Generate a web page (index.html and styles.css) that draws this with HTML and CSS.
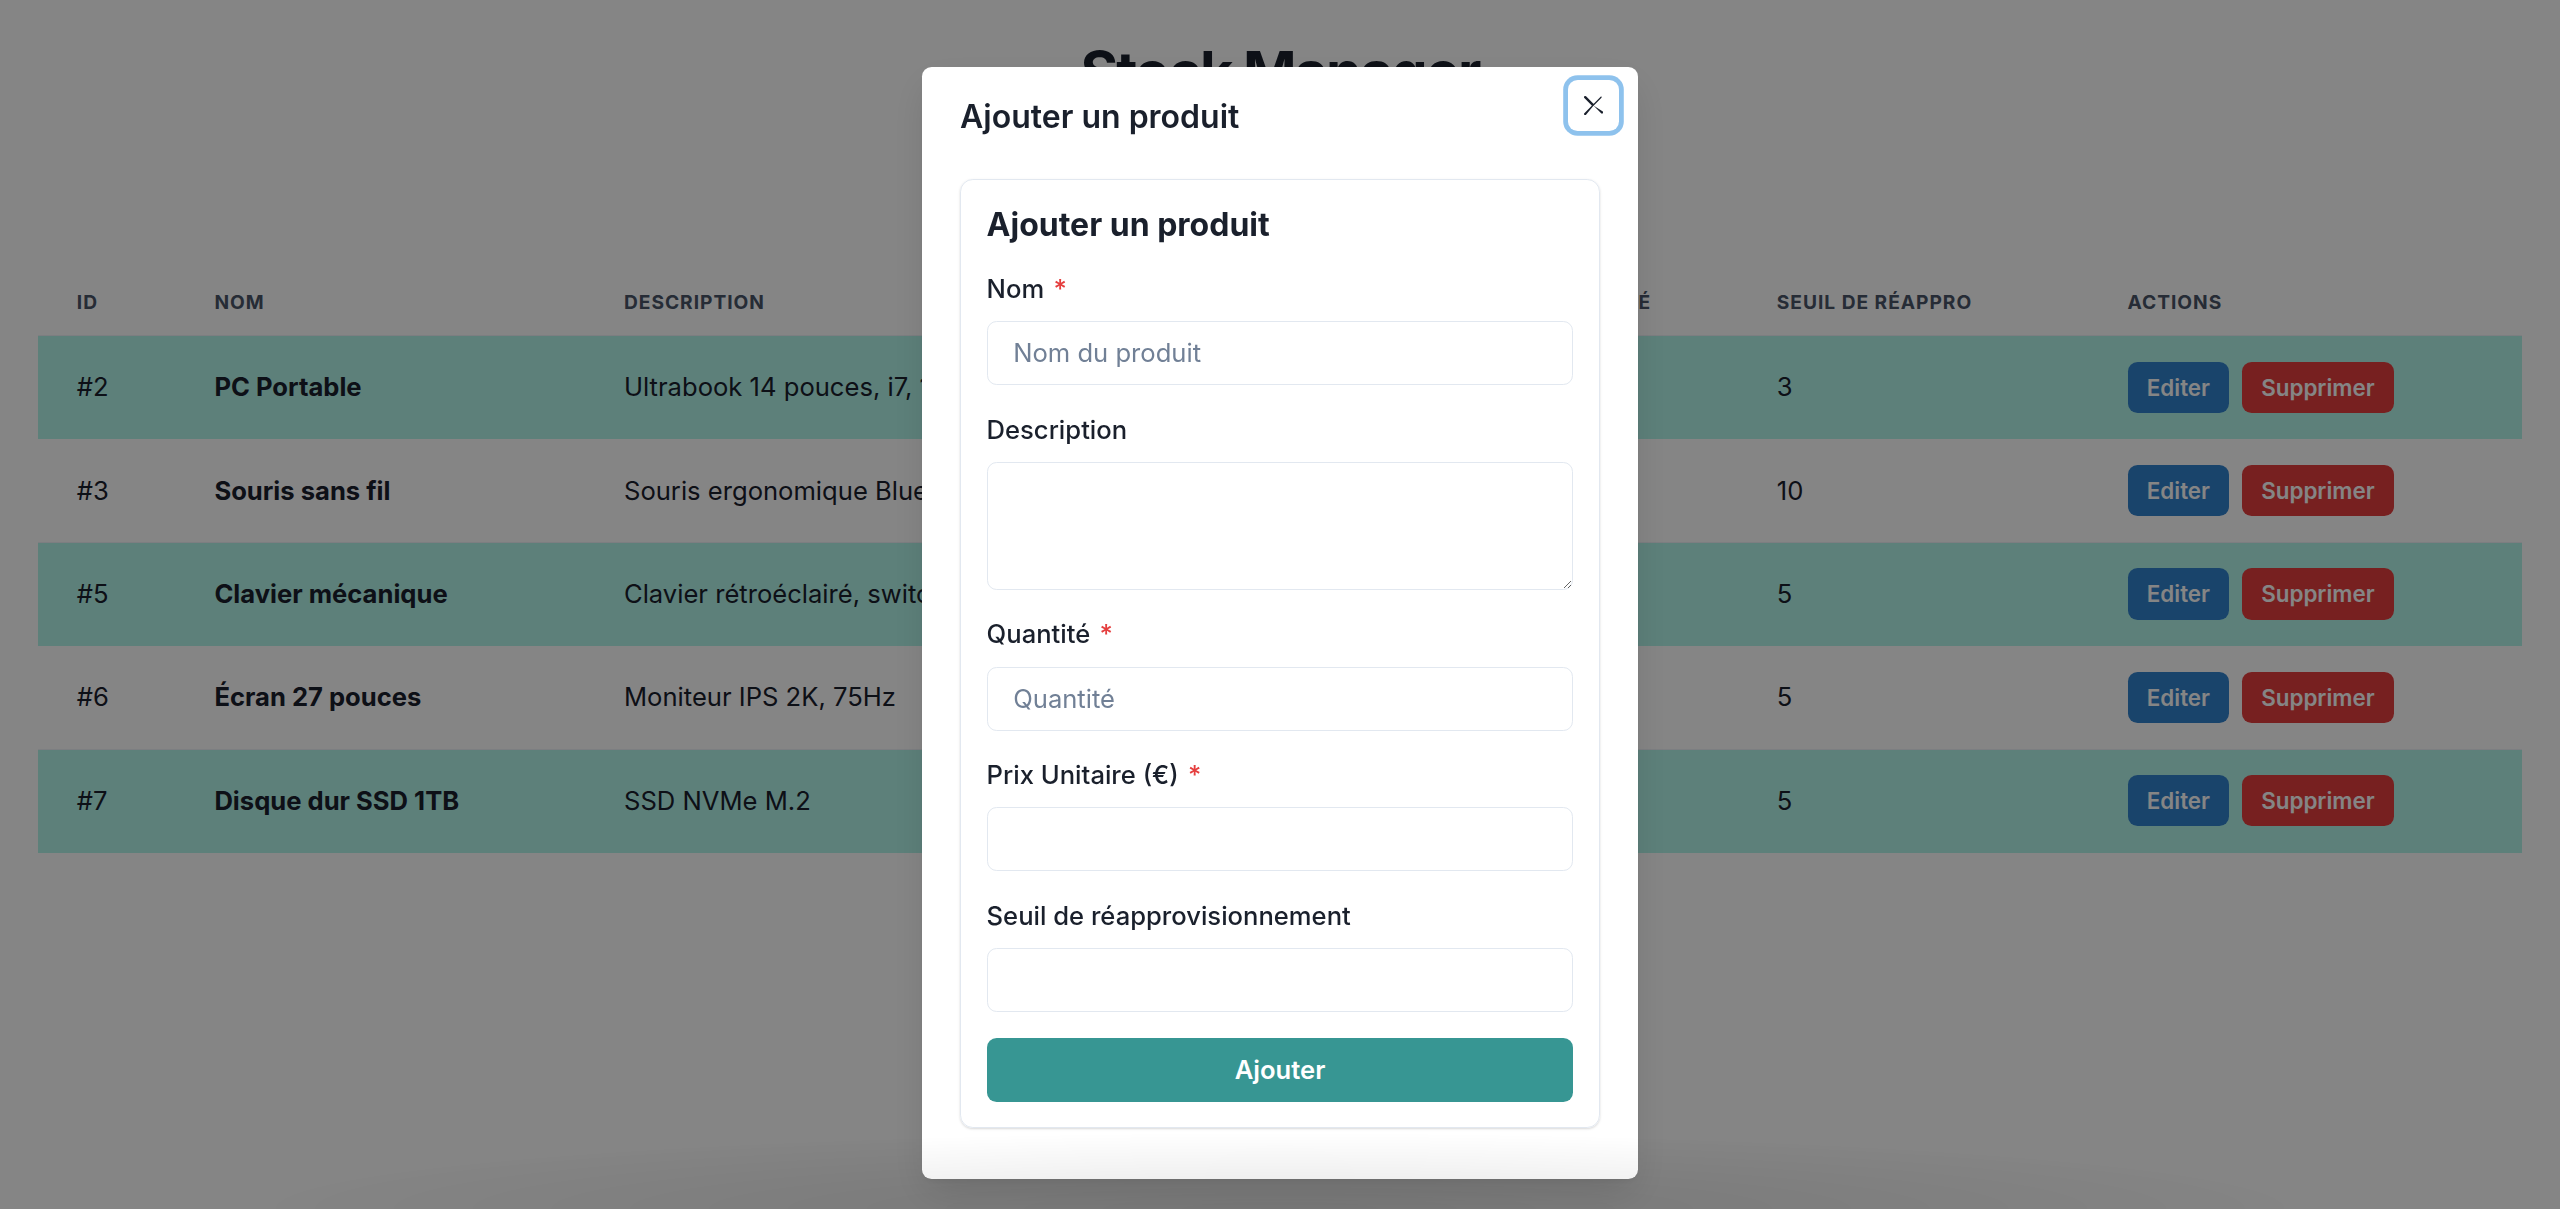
FILE: index.html
```html
<!DOCTYPE html>
<html lang="fr">
<head>
  <meta charset="utf-8">
  <meta name="viewport" content="width=device-width, initial-scale=1.0">
  <title>Stock Manager</title>
  <link rel="stylesheet" href="styles.css">
</head>
<body>
    <div class="page">
        <h1 class="title">Stock Manager</h1>
        <div class="toolbar">
            <button class="btn btn-teal">Ajouter un produit</button>
        </div>
        <table class="stock-table">
            <colgroup>
                <col class="col-id">
                <col class="col-name">
                <col class="col-desc">
                <col class="col-price">
                <col class="col-qty">
                <col class="col-threshold">
                <col class="col-actions">
            </colgroup>
            <thead>
                <tr>
                    <th>ID</th>
                    <th>Nom</th>
                    <th>Description</th>
                    <th>Prix unitaire</th>
                    <th>Quantité</th>
                    <th>Seuil de réappro</th>
                    <th>Actions</th>
                </tr>
            </thead>
            <tbody>
                <tr>
                    <td>#2</td>
                    <td class="name">PC Portable</td>
                    <td>Ultrabook 14 pouces, i7, 16Go RAM</td>
                    <td>899.99 €</td>
                    <td>12</td>
                    <td>3</td>
                    <td><div class="actions"><button class="btn btn-sm btn-blue">Editer</button><button class="btn btn-sm btn-red">Supprimer</button></div></td>
                </tr>
                <tr>
                    <td>#3</td>
                    <td class="name">Souris sans fil</td>
                    <td>Souris ergonomique Bluetooth</td>
                    <td>24.90 €</td>
                    <td>45</td>
                    <td>10</td>
                    <td><div class="actions"><button class="btn btn-sm btn-blue">Editer</button><button class="btn btn-sm btn-red">Supprimer</button></div></td>
                </tr>
                <tr>
                    <td>#5</td>
                    <td class="name">Clavier mécanique</td>
                    <td>Clavier rétroéclairé, switch rouges</td>
                    <td>79.00 €</td>
                    <td>20</td>
                    <td>5</td>
                    <td><div class="actions"><button class="btn btn-sm btn-blue">Editer</button><button class="btn btn-sm btn-red">Supprimer</button></div></td>
                </tr>
                <tr>
                    <td>#6</td>
                    <td class="name">Écran 27 pouces</td>
                    <td>Moniteur IPS 2K, 75Hz</td>
                    <td>249.00 €</td>
                    <td>8</td>
                    <td>5</td>
                    <td><div class="actions"><button class="btn btn-sm btn-blue">Editer</button><button class="btn btn-sm btn-red">Supprimer</button></div></td>
                </tr>
                <tr>
                    <td>#7</td>
                    <td class="name">Disque dur SSD 1TB</td>
                    <td>SSD NVMe M.2</td>
                    <td>109.99 €</td>
                    <td>15</td>
                    <td>5</td>
                    <td><div class="actions"><button class="btn btn-sm btn-blue">Editer</button><button class="btn btn-sm btn-red">Supprimer</button></div></td>
                </tr>
            </tbody>
        </table>
    </div>

    <div class="overlay"></div>
    <div class="modal-wrap">
        <section class="modal">
            <header class="modal-header">Ajouter un produit</header>
            <button class="modal-close" aria-label="Close">
                <svg viewBox="0 0 24 24" aria-hidden="true"><path fill="currentColor" d="M.439,21.44a1.5,1.5,0,0,0,2.122,2.121L11.823,12.3a.25.25,0,0,1,.354,0l9.262,9.263a1.5,1.5,0,1,0,2.122-2.121L12.3,12.177a.25.25,0,0,1,0-.354l9.263-9.262A1.5,1.5,0,0,0,21.439.44L12.177,9.7a.25.25,0,0,1-.354,0L2.561.44A1.5,1.5,0,0,0,.439,2.561L9.7,11.823a.25.25,0,0,1,0,.354Z"></path></svg>
            </button>
            <div class="modal-body">
                <form class="card">
                    <h2 class="card-title">Ajouter un produit</h2>
                    <div class="field">
                        <label for="name">Nom <span class="req">*</span></label>
                        <input type="text" id="name" placeholder="Nom du produit">
                    </div>
                    <div class="field">
                        <label for="desc">Description</label>
                        <textarea id="desc"></textarea>
                    </div>
                    <div class="field">
                        <label for="qty">Quantité <span class="req">*</span></label>
                        <input type="number" id="qty" placeholder="Quantité">
                    </div>
                    <div class="field">
                        <label for="price">Prix Unitaire (€) <span class="req">*</span></label>
                        <input type="number" id="price">
                    </div>
                    <div class="field">
                        <label for="threshold">Seuil de réapprovisionnement</label>
                        <input type="number" id="threshold">
                    </div>
                    <button type="button" class="btn btn-teal btn-block">Ajouter</button>
                </form>
            </div>
        </section>
    </div>
    <div class="bottom-fade"></div>
</body>
</html>
```

FILE: styles.css
```css
* {
    box-sizing: border-box;
}
html {
    font-size: 25.6px;
}
body {
    margin: 0;
    background-color: #fff;
    color: #1A202C;
    font-family: Inter, "Noto Sans", sans-serif;
    line-height: 1.5;
}
button, input, textarea {
    font-family: inherit;
}

.page {
    padding: 1.5rem;
}
.title {
    margin: 0 0 2rem 0;
    font-size: 2.25rem;
    font-weight: 700;
    line-height: 1.2;
    letter-spacing: -0.035em;
    text-align: center;
}
.toolbar {
    display: flex;
    justify-content: center;
    margin-bottom: 1.89rem;
}

/* Buttons */
.btn {
    display: inline-flex;
    align-items: center;
    justify-content: center;
    height: 2.5rem;
    padding: 0 1rem;
    border: none;
    border-radius: 0.375rem;
    font-size: 1rem;
    font-weight: 600;
    color: #fff;
    cursor: pointer;
}
.btn-sm {
    height: 2rem;
    padding: 0 0.75rem;
    font-size: 0.875rem;
}
.btn-teal {
    background-color: #379693;
}
.btn-blue {
    background-color: #3182CE;
}
.btn-red {
    background-color: #E53E3E;
}
.btn-block {
    width: 100%;
}

/* Table */
.stock-table {
    width: 100%;
    border-collapse: collapse;
    table-layout: fixed;
}
.col-id { width: 5.375rem; }
.col-name { width: 16rem; }
.col-desc { width: 21rem; }
.col-price { width: 14.91rem; }
.col-qty { width: 9.125rem; }
.col-threshold { width: 13.7rem; }
.stock-table th {
    padding: 0.75rem 1.5rem;
    font-size: 0.75rem;
    font-weight: 700;
    line-height: 1rem;
    letter-spacing: 0.05em;
    text-transform: uppercase;
    text-align: left;
    color: #4A5568;
    border-bottom: 1px solid #EDF2F7;
    white-space: nowrap;
}
.stock-table td {
    padding: 1rem 1.5rem;
    font-size: 1rem;
    line-height: 1.25rem;
    border-bottom: 1px solid #EDF2F7;
    white-space: nowrap;
    overflow: hidden;
}
.stock-table tbody tr:nth-of-type(odd) td {
    background-color: #B2F5EA;
    border-bottom-color: #B2F5EA;
}
.stock-table .name {
    font-weight: 700;
}
.actions {
    display: flex;
    gap: 0.5rem;
}

/* Modal */
.overlay {
    position: fixed;
    inset: 0;
    background-color: rgba(0, 0, 0, 0.48);
}
.modal-wrap {
    position: fixed;
    inset: 0;
    display: flex;
    justify-content: center;
    align-items: flex-start;
    padding-top: 2.625rem;
}
.modal {
    position: relative;
    width: 28rem;
    background-color: #fff;
    border-radius: 0.375rem;
    box-shadow: 0 0.6rem 1.5rem -0.2rem rgba(0, 0, 0, 0.14), 0 4px 6px -2px rgba(0, 0, 0, 0.05);
}
.modal-header {
    padding: 1rem 1.5rem;
    font-size: 1.25rem;
    font-weight: 600;
}
.modal-close {
    position: absolute;
    top: 0.5rem;
    right: 0.75rem;
    display: flex;
    align-items: center;
    justify-content: center;
    width: 2rem;
    height: 2rem;
    padding: 0;
    border: none;
    border-radius: 0.375rem;
    background: transparent;
    color: #1A202C;
    box-shadow: 0 0 0 0.1875rem rgba(66, 153, 225, 0.6);
}
.modal-close svg {
    width: 0.75rem;
    height: 0.75rem;
}
.modal-body {
    padding: 0.5rem 1.5rem 2rem;
}
.bottom-fade {
    position: fixed;
    left: 0;
    right: 0;
    bottom: 0;
    height: 4rem;
    background: radial-gradient(ellipse 40rem 3rem at 50% 100%, rgba(0, 0, 0, 0.1), rgba(0, 0, 0, 0) 100%);
    pointer-events: none;
}

/* Form card */
.card {
    display: flex;
    flex-direction: column;
    gap: 1rem;
    padding: 1rem;
    border: 1px solid #E2E8F0;
    border-radius: 0.5rem;
    box-shadow: 0 1px 3px 0 rgba(0, 0, 0, 0.1), 0 1px 2px 0 rgba(0, 0, 0, 0.06);
}
.card-title {
    margin: 0;
    font-size: 1.25rem;
    font-weight: 700;
    line-height: 1.2;
}
.field label {
    display: block;
    margin-bottom: 0.5rem;
    font-size: 1rem;
    font-weight: 500;
}
.req {
    margin-left: 0.1rem;
    color: #E53E3E;
}
.field input, .field textarea {
    display: block;
    width: 100%;
    padding: 0 1rem;
    border: 1px solid #E2E8F0;
    border-radius: 0.375rem;
    background-color: #fff;
    font-size: 1rem;
    color: #1A202C;
    outline: none;
}
.field input {
    height: 2.5rem;
}
.field textarea {
    min-height: 5rem;
    height: 5rem;
    padding: 0.5rem 1rem;
    line-height: 1.375;
}
.field input::placeholder {
    color: #718096;
}
input[type=number]::-webkit-inner-spin-button {
    -webkit-appearance: none;
}
```
